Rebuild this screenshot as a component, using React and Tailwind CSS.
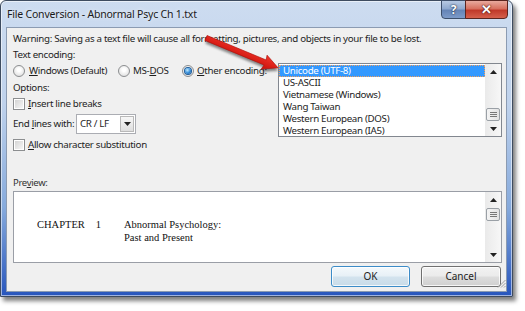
import React from "react";

const U = ({ children }) => (
  <span className="underline decoration-1 underline-offset-[1px]">{children}</span>
);

function Radio({ checked }) {
  return (
    <span className="flex h-[12px] w-[12px] shrink-0 items-center justify-center rounded-full border border-[#8c8e90] bg-[radial-gradient(circle_at_50%_40%,#ffffff_20%,#d6d6d6)]">
      {checked && (
        <span className="h-[6px] w-[6px] rounded-full bg-[radial-gradient(circle_at_40%_35%,#c4ecff,#2f8ad9_55%,#0b4a8c)] shadow-[0_0_0_1px_#1d5c9a]" />
      )}
    </span>
  );
}

function Check() {
  return (
    <span className="block h-[12px] w-[12px] shrink-0 border border-[#8c8e90] bg-white p-[1px]">
      <span className="block h-full w-full bg-[linear-gradient(135deg,#d4d4d4,#f6f6f6)]" />
    </span>
  );
}

function Tri({ up }) {
  return (
    <svg width="7" height="4" viewBox="0 0 7 4" className="block">
      {up ? <polygon points="0,4 7,4 3.5,0" fill="#222" /> : <polygon points="0,0 7,0 3.5,4" fill="#222" />}
    </svg>
  );
}

function Thumb() {
  return (
    <div className="mx-[1px] flex h-[13px] items-center justify-center rounded-[2px] border border-[#9aa0a6] bg-[linear-gradient(90deg,#f4f4f4,#e2e2e2)]">
      <svg width="7" height="6" viewBox="0 0 7 6" className="block">
        <line x1="0" y1="0.5" x2="7" y2="0.5" stroke="#777" />
        <line x1="0" y1="2.5" x2="7" y2="2.5" stroke="#777" />
        <line x1="0" y1="4.5" x2="7" y2="4.5" stroke="#777" />
      </svg>
    </div>
  );
}

function ScrollBar({ thumbTop }) {
  return (
    <div className="flex h-full w-[16px] shrink-0 flex-col bg-[linear-gradient(90deg,#eaeaea,#f7f7f7)]">
      <div className="flex h-[15px] shrink-0 items-center justify-center">
        <Tri up />
      </div>
      <div className="flex-1">
        <div className={thumbTop}>
          <Thumb />
        </div>
      </div>
      <div className="flex h-[15px] shrink-0 items-center justify-center">
        <Tri />
      </div>
    </div>
  );
}

const encodings = [
  "Unicode (UTF-8)",
  "US-ASCII",
  "Vietnamese (Windows)",
  "Wang Taiwan",
  "Western European (DOS)",
  "Western European (IA5)",
];

export default function App() {
  return (
    <div className="relative h-[311px] w-[525px] overflow-hidden whitespace-nowrap bg-white font-['Noto_Sans',sans-serif] text-[9.75px] leading-[14px] tracking-[-0.32px] text-[#1e1e1e]">
      {/* window */}
      <div className="flex h-[297px] w-[513px] flex-col rounded-t-[6px] border border-[#3e4c60] bg-[linear-gradient(180deg,#cddcf0_0%,#bfd2ec_35%,#86aadc_70%,#2856bd_100%)] shadow-[3px_4px_4px_rgba(0,0,0,0.5),inset_0_0_0_1px_rgba(255,255,255,0.55)]">
        {/* title bar */}
        <div className="flex h-[26px] shrink-0 items-start">
          <div className="pl-[6px] pt-[5px] text-[10.5px] leading-[16px] tracking-[-0.2px] text-[#1a1a1a] [text-shadow:0_0_4px_rgba(255,255,255,0.9)]">
            File Conversion - Abnormal Psyc Ch 1.txt
          </div>
          <div className="ml-auto mr-[4px] -mt-px flex h-[19px]">
            <div className="flex w-[25px] items-center justify-center rounded-bl-[4px] border border-[#3d4f6b] bg-[linear-gradient(180deg,#b7c9e2_0%,#8fa9cf_45%,#6584b6_55%,#7d9bc9_100%)] text-[12px] font-bold leading-none tracking-normal text-white [text-shadow:0_0_2px_#1b2b45,0_0_1px_#1b2b45]">
              ?
            </div>
            <div className="-ml-px flex w-[43px] items-center justify-center rounded-br-[4px] border border-[#5a2520] bg-[linear-gradient(180deg,#e8aa9e_0%,#d7705f_45%,#c0392a_55%,#d5604c_100%)] text-[13px] font-bold leading-none tracking-normal text-white [text-shadow:0_0_2px_#4a1410,0_0_1px_#4a1410]">
              ✕
            </div>
          </div>
        </div>

        {/* client */}
        <div className="mx-[5px] mb-[4px] flex flex-1 flex-col border border-[#8b9bb2] bg-[#f0f0f0] pl-[6px] pr-[4px] pt-[4px]">
          <div className="h-[14px]">
            Warning: Saving as a text file will cause all formatting, pictures, and objects in your file to be lost.
          </div>
          <div className="mt-[2px] h-[14px]">Text encoding:</div>

          <div className="mt-[1px] flex">
            <div className="flex flex-col">
              <div className="mt-[1px] flex h-[14px] items-center">
                <div className="flex w-[105px] items-center gap-[4px]">
                  <Radio />
                  <span>
                    <U>W</U>indows (Default)
                  </span>
                </div>
                <div className="flex w-[64px] items-center gap-[3px]">
                  <Radio />
                  <span>
                    MS-<U>D</U>OS
                  </span>
                </div>
                <div className="flex items-center gap-[3px]">
                  <Radio checked />
                  <span>
                    <U>O</U>ther encoding:
                  </span>
                </div>
              </div>
              <div className="mt-[3px] h-[14px]">Options:</div>
              <div className="mt-[2px] flex h-[14px] items-center gap-[3px]">
                <Check />
                <span>
                  <U>I</U>nsert line breaks
                </span>
              </div>
              <div className="mt-[3px] flex h-[20px] items-center">
                <span className="w-[63px] shrink-0">
                  End <U>l</U>ines with:
                </span>
                <div className="flex h-[20px] w-[60px] items-stretch border border-[#abadb3] bg-white">
                  <span className="flex-1 pl-[3px] leading-[18px]">CR / LF</span>
                  <div className="m-[1px] flex w-[14px] items-center justify-center border border-[#b9b9b9] bg-[linear-gradient(180deg,#f7f7f7,#dedede)]">
                    <Tri />
                  </div>
                </div>
              </div>
              <div className="mt-[4px] flex h-[14px] items-center gap-[3px]">
                <Check />
                <span>
                  <U>A</U>llow character substitution
                </span>
              </div>
            </div>

            {/* list box */}
            <div className="ml-auto flex h-[74px] w-[224px] border border-[#82878f] bg-white">
              <div className="flex-1 pt-[1px]">
                {encodings.map((e, i) => (
                  <div
                    key={e}
                    className={
                      i === 0
                        ? "h-[12px] border border-dotted border-[#f0a060] bg-[#3399ff] pl-[3px] leading-[10px] text-white"
                        : "h-[12px] pl-[4px] leading-[12px]"
                    }
                  >
                    {e}
                  </div>
                ))}
              </div>
              <ScrollBar thumbTop="mt-[29px]" />
            </div>
          </div>

          <div className="mt-[24px] h-[14px] text-[9.5px] text-[#333]">
            Pre<U>v</U>iew:
          </div>
          <div className="mt-[1px] flex h-[72px] border border-[#9a9ea6] bg-white">
            <div className="flex-1 pl-[23px] pt-[26px] font-['Liberation_Serif',serif] text-[10.5px] leading-[13px] tracking-normal text-[#111]">
              <div className="flex">
                <span className="w-[87px] shrink-0">
                  CHAPTER<span className="pl-[11px]">1</span>
                </span>
                <span>
                  Abnormal Psychology:
                  <br />
                  Past and Present
                </span>
              </div>
            </div>
            <ScrollBar thumbTop="mt-[1px]" />
          </div>

          <div className="mt-[3px] flex justify-end gap-[11px] pr-[1px]">
            <button className="h-[21px] w-[79px] rounded-[3px] border border-[#3c8cc8] bg-[linear-gradient(180deg,#f4f9fc_0%,#e7f0f6_48%,#d3e3ee_52%,#c8dbe8_100%)] text-[10px] leading-[19px] tracking-normal text-[#1e1e1e] shadow-[inset_0_0_0_1px_rgba(255,255,255,0.8)]">
              OK
            </button>
            <button className="h-[21px] w-[80px] rounded-[3px] border border-[#707070] bg-[linear-gradient(180deg,#f2f2f2_0%,#ebebeb_48%,#dddddd_52%,#cfcfcf_100%)] text-[10px] leading-[19px] tracking-normal text-[#1e1e1e] shadow-[inset_0_0_0_1px_rgba(255,255,255,0.8)]">
              Cancel
            </button>
          </div>
        </div>
      </div>

      {/* resize grip */}
      <svg className="absolute left-[497px] top-[279px]" width="9" height="9" viewBox="0 0 9 9">
        <line x1="1" y1="8.5" x2="8.5" y2="1" stroke="#a0a0a0" />
        <line x1="4" y1="8.5" x2="8.5" y2="4" stroke="#a0a0a0" />
        <line x1="7" y1="8.5" x2="8.5" y2="7" stroke="#a0a0a0" />
      </svg>

      {/* red annotation arrow */}
      <svg className="pointer-events-none absolute left-0 top-0" width="525" height="311" viewBox="0 0 525 311">
        <defs>
          <filter id="blur" x="-20%" y="-20%" width="140%" height="140%">
            <feGaussianBlur stdDeviation="1.2" />
          </filter>
          <linearGradient id="red" x1="0" y1="0" x2="0" y2="1">
            <stop offset="0" stopColor="#f2352a" />
            <stop offset="1" stopColor="#c8100a" />
          </linearGradient>
        </defs>
        <g transform="translate(206 38) rotate(22.5)">
          <polygon
            points="0,-2.7 64,-2.7 63,-7.5 78,0 63,7.5 64,2.7 0,2.7"
            fill="rgba(0,0,0,0.45)"
            filter="url(#blur)"
            transform="translate(1.5 2.5)"
          />
          <polygon points="0,-2.7 64,-2.7 63,-7.5 78,0 63,7.5 64,2.7 0,2.7" fill="url(#red)" stroke="#b00e08" strokeWidth="0.6" />
        </g>
      </svg>
    </div>
  );
}
